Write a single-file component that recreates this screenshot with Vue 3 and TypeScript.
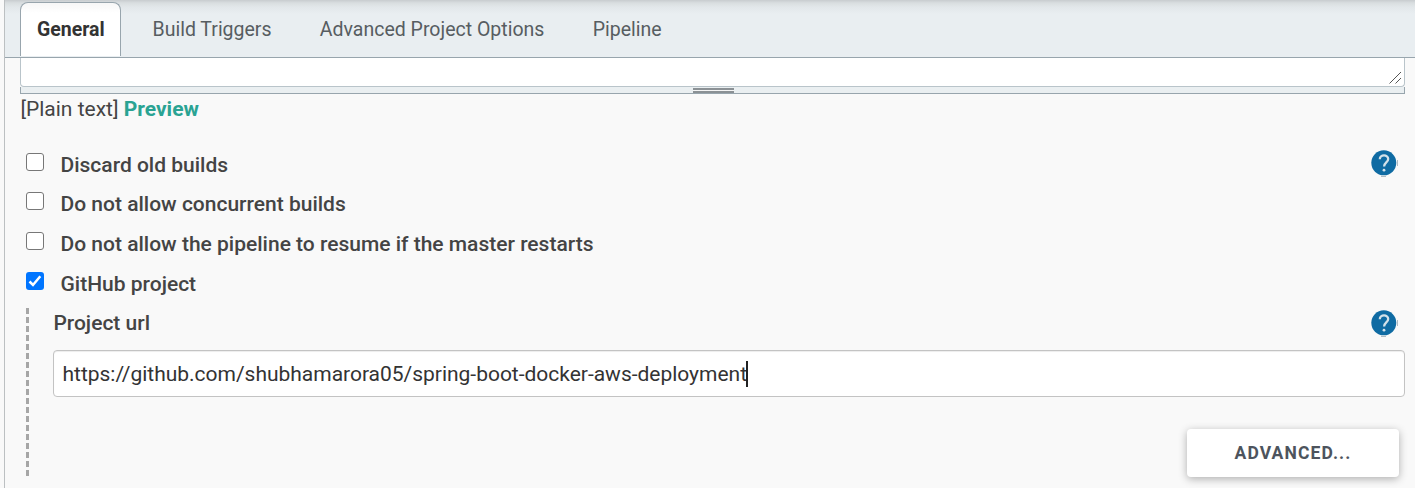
<script setup lang="ts">
import { ref } from 'vue'

interface Option {
  label: string
  checked: boolean
  help: boolean
}

const tabs: string[] = ['General', 'Build Triggers', 'Advanced Project Options', 'Pipeline']
const activeTab = ref<string>('General')
const options = ref<Option[]>([
  { label: 'Discard old builds', checked: false, help: true },
  { label: 'Do not allow concurrent builds', checked: false, help: false },
  { label: 'Do not allow the pipeline to resume if the master restarts', checked: false, help: false },
  { label: 'GitHub project', checked: true, help: false },
])
const projectUrl = ref<string>('https://github.com/shubhamarora05/spring-boot-docker-aws-deployment')
</script>

<template>
  <div class="page">
    <main class="config">
      <nav class="tabs">
        <button
          v-for="tab in tabs"
          :key="tab"
          class="tab"
          :class="{ active: tab === activeTab }"
          @click="activeTab = tab"
        >{{ tab }}</button>
      </nav>

      <div class="description">
        <div class="textarea">
          <svg class="resizer" width="13" height="13" viewBox="0 0 13 13">
            <path d="M.5 12.500 12 1M6.500 12.500 12 7" stroke="#555" stroke-width="1" fill="none" />
          </svg>
        </div>
        <div class="handle"><span class="grip"></span></div>
      </div>
      <div class="preview">[Plain text] <a>Preview</a></div>

      <div class="options">
        <div v-for="option in options" :key="option.label" class="option">
          <span class="box" :class="{ checked: option.checked }" @click="option.checked = !option.checked">
            <svg v-if="option.checked" width="18" height="18" viewBox="0 0 18 18">
              <path d="M3.500 9.500 7 13 14.300 4.300" fill="none" stroke="#fff" stroke-width="2.500" />
            </svg>
          </span>
          <label>{{ option.label }}</label>
          <svg v-if="option.help" class="help" width="28" height="28" viewBox="0 0 28 28">
            <circle cx="13.800" cy="13.800" r="12.500" fill="#0f6ba3" />
            <path d="M9.800 10.200C9.800 5.200 18.200 5.200 18.200 10.100c0 3.300-4.100 3.500-4.100 7.400" fill="none" stroke="#d3e1e9" stroke-width="2.300" />
            <circle cx="14" cy="21.200" r="1.400" fill="#d3e1e9" />
            <path d="M11 27.500h5M27.500 11v6" stroke="#b0bcc3" stroke-width="1" />
          </svg>
        </div>
      </div>

      <section class="nested">
        <div class="field-head">
          <label>Project url</label>
          <svg class="help" width="28" height="28" viewBox="0 0 28 28">
            <circle cx="13.800" cy="13.800" r="12.500" fill="#0f6ba3" />
            <path d="M9.800 10.200C9.800 5.200 18.200 5.200 18.200 10.100c0 3.300-4.100 3.500-4.100 7.400" fill="none" stroke="#d3e1e9" stroke-width="2.300" />
            <circle cx="14" cy="21.200" r="1.400" fill="#d3e1e9" />
            <path d="M11 27.500h5M27.500 11v6" stroke="#b0bcc3" stroke-width="1" />
          </svg>
        </div>
        <div class="field"><span class="url">{{ projectUrl }}</span><span class="caret"></span></div>
        <div class="actions"><button class="advanced">ADVANCED...</button></div>
      </section>
    </main>
  </div>
</template>

<style>
body {
  background: #f9f9f9;
}
</style>

<style scoped>
* {
  box-sizing: border-box;
}
.page {
  height: 488px;
  overflow: hidden;
  padding-left: 4px;
  background: #f9f9f9;
  font-family: Roboto, "Liberation Sans", sans-serif;
  font-size: 21px;
  color: #444;
}
.config {
  height: 488px;
  border-left: 1px solid #bcc0c2;
}
.tabs {
  display: flex;
  align-items: flex-start;
  gap: 14.500px;
  height: 58px;
  padding: 2px 0 0 15px;
  border-bottom: 1px solid #98a5ad;
  background: linear-gradient(#c8cccf 0, #d9dee0 3px, #e2e7ea 7px, #e9eef1 14px);
}
.tab {
  height: 54px;
  padding: 0 15.800px 0 16px;
  border: 1px solid transparent;
  border-bottom: 0;
  border-radius: 8px 8px 0 0;
  background: none;
  font: 400 19.500px/53px Roboto, sans-serif;
  color: #575d61;
  white-space: nowrap;
}
.tab.active {
  padding-right: 15.300px;
  background: linear-gradient(#f7f7f7, #fff 10px);
  border-color: #98a5ad;
  color: #333;
  font-weight: 700;
}
.description {
  margin: 0 10px 0 15px;
}
.textarea {
  display: flex;
  justify-content: flex-end;
  align-items: flex-end;
  height: 29px;
  padding: 0 2px 2px 0;
  border: 1px solid #b9c4ca;
  border-top: 0;
  border-radius: 0 0 4px 4px;
  background: #fff;
}
.handle {
  display: flex;
  justify-content: center;
  height: 7px;
  padding: 1px 0 0 1px;
  border: 1px solid #98a5ad;
  border-top: 0;
  background: #eaeff1;
}
.grip {
  width: 41px;
  height: 5px;
  border-top: 2px solid #8b9195;
  border-bottom: 2px solid #8b9195;
  background: #f5f5f5;
}
.preview {
  height: 49px;
  padding-left: 15.400px;
  line-height: 31px;
}
.preview a {
  color: #2aa393;
  font-weight: 700;
}
.options {
  padding: 0 17px 0 21px;
}
.option {
  display: flex;
  height: 40px;
}
.option:first-child {
  height: 39px;
}
.box {
  width: 18px;
  height: 18px;
  margin: 10px 16.500px 0 0;
  border: 1.500px solid #777;
  border-radius: 3px;
  background: #fff;
}
.box.checked {
  border: 0;
  background: #0075ff;
}
.box svg {
  display: block;
}
label {
  font-weight: 500;
  line-height: 43px;
}
.option label {
  margin-top: 1px;
  line-height: 42px;
}
.help {
  flex: none;
  margin-left: auto;
}
.option .help {
  margin-top: 6px;
}
.nested {
  display: flex;
  flex-direction: column;
  height: 169px;
  margin: 6px 10px 0 21px;
  padding-left: 24px;
  background: repeating-linear-gradient(#a6a6a6 0 6px, transparent 6px 9px) 0 0 / 3px 100% no-repeat;
}
.field-head {
  display: flex;
  height: 42px;
  padding: 1px 7px 0 3.400px;
}
.field-head label {
  line-height: 28px;
}
.field {
  display: flex;
  align-items: center;
  height: 47px;
  margin-left: 3px;
  padding-left: 8.500px;
  border: 1px solid #c3c3c3;
  border-radius: 4px;
  background: #fff;
  box-shadow: inset 0 1px 1px rgba(0, 0, 0, 0.075);
  color: #333;
}
.url {
  letter-spacing: -0.015px;
}
.caret {
  width: 2px;
  height: 26px;
  margin-left: -1.500px;
  background: #222;
}
.actions {
  display: flex;
  justify-content: flex-end;
  padding: 32px 6px 0 0;
}
.advanced {
  flex: none;
  width: 212px;
  height: 48px;
  padding: 0;
  border: 0;
  border-radius: 4px;
  background: #fff;
  box-shadow: 0 2px 8px rgba(0, 0, 0, 0.3);
  font: 700 17.500px/48px Roboto, sans-serif;
  letter-spacing: 1.100px;
  color: #4d545d;
}
</style>
